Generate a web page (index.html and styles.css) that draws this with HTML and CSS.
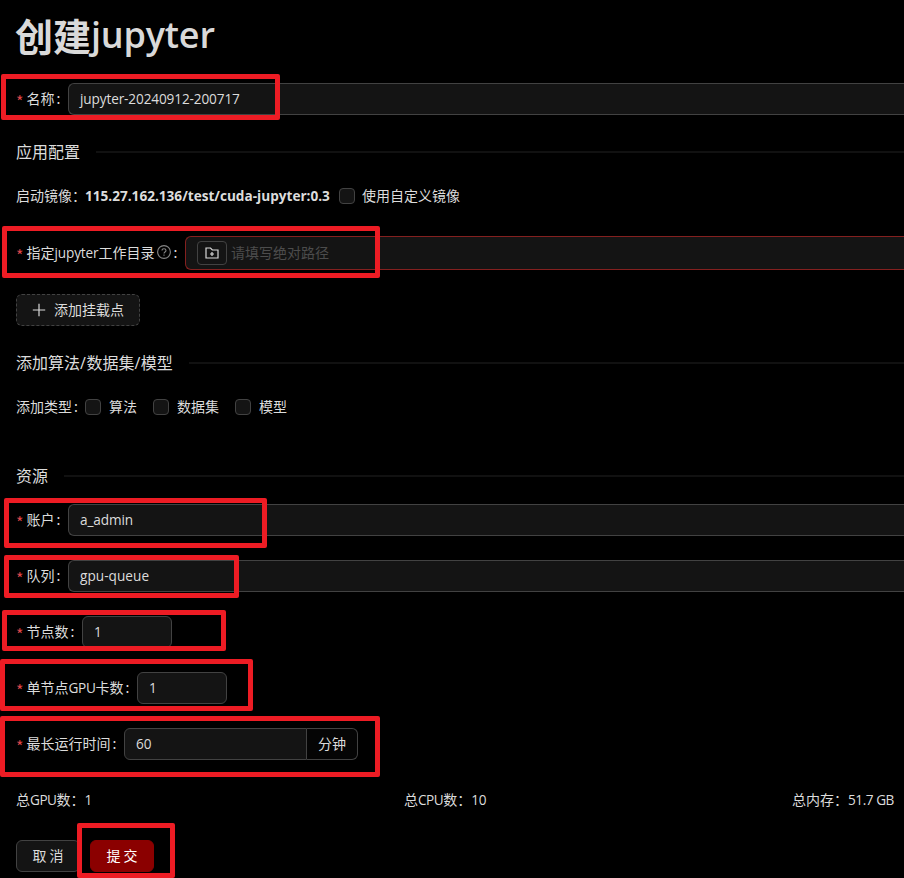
FILE: index.html
```html
<!DOCTYPE html>
<html lang="zh-CN">
<head>
<meta charset="utf-8">
<title>创建jupyter</title>
<link rel="stylesheet" href="styles.css">
</head>
<body>
<main class="page">
  <h1 class="title">创建<span class="title-latin">jupyter</span></h1>
  <form class="form">
    <div class="row row-name">
      <span class="required">*</span><span class="label">名称</span><span class="colon">:</span>
      <div class="input grow"><span class="latin value-name">jupyter-20240912-200717</span></div>
    </div>
    <div class="divider"><span>应用配置</span></div>
    <div class="row row-image">
      <span>启动镜像：</span><strong class="image-name">115.27.162.136/test/cuda-jupyter:0.3</strong>
      <span class="check"></span><span>使用自定义镜像</span>
    </div>
    <div class="row row-dir">
      <span class="required">*</span><span class="label">指定<span class="latin label-jupyter">jupyter</span>工作目录</span>
      <svg class="help" viewBox="0 0 14 14"><circle cx="7" cy="7" r="6.4"/><path d="M5 5.6C5 4.3 5.8 3.7 7 3.7s2 .7 2 1.8c0 1.5-2 1.5-2 3"/><path d="M7 9.6v1.1"/></svg><span class="colon">:</span>
      <div class="input input-error grow">
        <span class="folder"><svg viewBox="0 0 14 14"><path d="M1 2h4.5l1.8 2H13v8H1zM7 6v4M5 8h4"/></svg></span>
        <span class="placeholder">请填写绝对路径</span>
      </div>
    </div>
    <div class="add-button">
      <svg viewBox="0 0 14 14"><path d="M7 .8v12.4M.8 7h12.4"/></svg><span>添加挂载点</span>
    </div>
    <div class="divider divider-types"><span>添加算法<span class="slash">/</span>数据集<span class="slash">/</span>模型</span></div>
    <div class="row row-types">
      <span>添加类型</span><span class="colon">:</span>
      <span class="check"></span><span class="option">算法</span>
      <span class="check"></span><span class="option">数据集</span>
      <span class="check"></span><span class="option">模型</span>
    </div>
    <div class="divider divider-resource"><span>资源</span></div>
    <div class="row row-account">
      <span class="required">*</span><span class="label">账户</span><span class="colon">:</span>
      <div class="input grow"><span class="latin">a_admin</span></div>
    </div>
    <div class="row row-field">
      <span class="required">*</span><span class="label">队列</span><span class="colon">:</span>
      <div class="input grow"><span class="latin value-queue">gpu-queue</span></div>
    </div>
    <div class="row row-field">
      <span class="required">*</span><span class="label">节点数</span><span class="colon">:</span>
      <div class="input input-number"><span class="latin">1</span></div>
    </div>
    <div class="row row-field">
      <span class="required">*</span><span class="label">单节点<span class="latin label-gpu">GPU</span>卡数</span><span class="colon">:</span>
      <div class="input input-number"><span class="latin">1</span></div>
    </div>
    <div class="row row-field">
      <span class="required">*</span><span class="label">最长运行时间</span><span class="colon">:</span>
      <div class="input input-time"><span class="latin">60</span></div><div class="addon">分钟</div>
    </div>
    <div class="totals">
      <span>总<span class="latin total-gpu">GPU</span>数：<span class="latin">1</span></span>
      <span>总<span class="latin total-gpu">CPU</span>数：<span class="latin">10</span></span>
      <span>总内存：<span class="latin memory">51.7 GB</span></span>
    </div>
    <div class="actions">
      <div class="button">取 消</div>
      <div class="button primary">提 交</div>
    </div>
  </form>
  <i class="mark mark-name"></i>
  <i class="mark mark-dir"></i>
  <i class="mark mark-account"></i>
  <i class="mark mark-queue"></i>
  <i class="mark mark-nodes"></i>
  <i class="mark mark-gpu"></i>
  <i class="mark mark-time"></i>
  <i class="mark mark-submit"></i>
</main>
</body>
</html>
```
FILE: styles.css
```css
* { box-sizing: border-box; }
body { margin: 0; background: #000; color: #dcdcdc; font: 14px/22px "Noto Sans CJK SC", sans-serif; }
.page { position: relative; width: 904px; height: 878px; overflow: hidden; padding: 11px 0 0 15px; white-space: nowrap; }
.title { margin: 0; height: 72px; font-size: 38px; line-height: 47px; font-weight: 700; display: flex; color: #d9d9d9; }
.title-latin { font: 600 36px/47px "Open Sans", sans-serif; letter-spacing: -.2px; }
.form { padding-left: 1px; }
.latin { font-family: "Open Sans", sans-serif; font-size: 13.6px; letter-spacing: -.1px; }
.value-name { letter-spacing: -.12px; }
.value-queue { letter-spacing: .05px; }
.label-jupyter { letter-spacing: -.15px; }
.label-gpu { letter-spacing: -.3px; }
.total-gpu { letter-spacing: -.5px; }
.memory { letter-spacing: -.45px; }
.row { display: flex; align-items: center; height: 32px; }
.row > span:not(.check):not(.required) { padding-bottom: 2px; }
.row .required { width: 10.5px; color: #dc4446; font: 16px/20px "Noto Sans CJK SC", sans-serif; padding-top: 4px; }
.colon { width: 13.5px; padding-left: 2px; flex: none; }
.input { display: flex; align-items: center; height: 32px; padding-left: 11px; background: #141414; border: 1px solid #424242; border-radius: 6px; }
.grow { flex: 1; border-right: 0; border-radius: 6px 0 0 6px; }
.divider { display: flex; align-items: center; gap: 16px; height: 24px; margin-top: 25px; font-size: 16px; line-height: 24px; }
.divider > span { padding-bottom: 2px; }
.divider::after { content: ""; flex: 1; height: 2px; background: #111; }
.slash { font-family: "Open Sans", sans-serif; letter-spacing: .5px; }
.row-image { margin-top: 16px; }
.image-name { font: 700 13.6px/22px "Open Sans", sans-serif; width: 245px; margin-left: -1px; }
.check { width: 16px; height: 16px; flex: none; background: #141414; border: 1px solid #424242; border-radius: 4px; }
.row-image .check { margin: 0 7px 0 9px; }
.row-dir { height: 34px; margin-top: 24px; }
.help { width: 14px; height: 14px; margin: 0 0 2px 3px; flex: none; fill: none; stroke: #858585; stroke-width: 1.1; }
.input-error { height: 34px; border-color: #84201f; }
.folder { display: flex; align-items: center; justify-content: center; width: 30px; height: 24px; border: 1px solid #424242; border-radius: 4px; margin-right: 4px; }
.folder svg { width: 14px; height: 14px; fill: none; stroke: #d9d9d9; stroke-width: 1.2; }
.placeholder { color: #4c4c4c; padding-bottom: 2px; }
.add-button { display: flex; align-items: center; width: 124px; height: 32px; margin-top: 24px; padding-left: 15px; gap: 8px; background: #141414; border: 1px dashed #424242; border-radius: 6px; }
.add-button svg { width: 14px; height: 14px; stroke: #d9d9d9; stroke-width: 1.2; }
.add-button span { padding-bottom: 2px; }
.row-types { margin-top: 16px; }
.row-types .colon { width: 13px; }
.option { margin: 0 16px 0 8px; }
.divider-resource { margin-top: 41px; }
.row-account { margin-top: 16px; }
.row-field { margin-top: 24px; }
.input-number { width: 90px; }
.input-time { width: 183px; border-radius: 6px 0 0 6px; }
.addon { width: 51px; height: 32px; border: 1px solid #424242; border-left: 0; border-radius: 0 6px 6px 0; background: #050505; text-align: center; line-height: 28px; }
.totals { display: grid; grid-template-columns: 388px 388px auto; height: 32px; margin-top: 24px; line-height: 30px; }
.actions { display: flex; gap: 10px; margin-top: 24px; }
.button { width: 64px; height: 32px; border: 1px solid #424242; border-radius: 6px; background: #141414; text-align: center; line-height: 28px; }
.primary { background: #8b0000; border-color: #8b0000; color: #fff; }
.mark { position: absolute; border: 5px solid #ed1c24; border-radius: 2px; }
.mark-name { left: 1px; top: 74px; width: 279px; height: 46px; }
.mark-dir { left: 2px; top: 226px; width: 378px; height: 52px; }
.mark-account { left: 4px; top: 498px; width: 263px; height: 50px; }
.mark-queue { left: 4px; top: 555px; width: 235px; height: 43px; }
.mark-nodes { left: 2px; top: 610px; width: 224px; height: 41px; }
.mark-gpu { left: 0; top: 659px; width: 253px; height: 52px; }
.mark-time { left: 0; top: 716px; width: 380px; height: 61px; }
.mark-submit { left: 77px; top: 823px; width: 98px; height: 55px; }
```
